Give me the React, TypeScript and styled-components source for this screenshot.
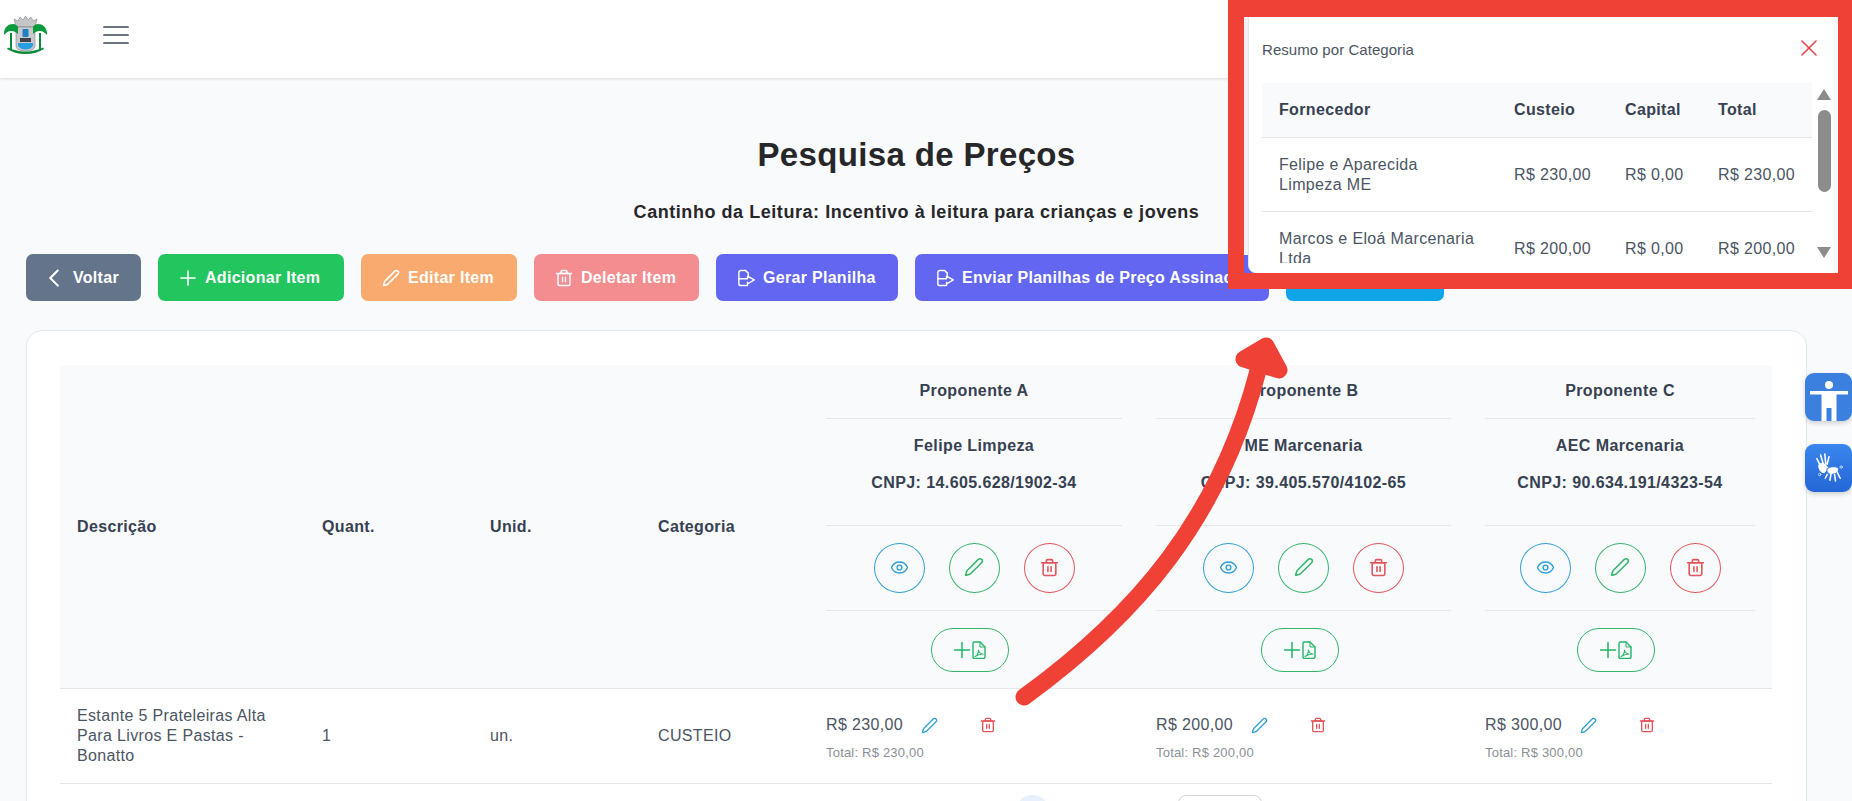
import React from "react";
import styled, { createGlobalStyle } from "styled-components";
import { Eye, Pen, Plus, ChevronLeft, X } from "lucide-react";

const Global = createGlobalStyle`
  html, body { margin: 0; padding: 0; height: 100%; overflow: hidden; }
  body { font-family: "Liberation Sans", Arial, sans-serif; background: #f8fafc; letter-spacing: .35px; }
  * { box-sizing: border-box; }
`;

const Page = styled.div`position: relative; width: 1852px; height: 801px; overflow: hidden; background: #f8fafc;`;
const NavBar = styled.header`
  height: 78px; background: #fff; box-shadow: 0 1px 3px rgba(0,0,0,.12);
  display: flex; align-items: flex-start; padding: 16px 0 0 4px;
`;
const LogoWrap = styled.div`width: 43px; height: 39px;`;
const Burger = styled.button`
  margin: 10px 0 0 56px; width: 26px; padding: 0; border: 0; background: none;
  display: flex; flex-direction: column; gap: 6px;
  span { display: block; height: 2px; background: #6b7280; border-radius: 1px; }
`;
const Main = styled.main`padding: 58px 45px 0 26px;`;
const Title = styled.h1`margin: 0; text-align: center; font-size: 33px; line-height: 38px; font-weight: 700; color: #27272a;`;
const Subtitle = styled.h2`margin: 27px 0 0; text-align: center; font-size: 18px; line-height: 22px; font-weight: 700; letter-spacing: .55px; color: #27272a;`;
const Toolbar = styled.div`display: flex; gap: 17px; margin-top: 31px;`;
const ActionButton = styled.button<{ $bg: string; $w: number }>`
  width: ${(p) => p.$w}px; height: 47px; padding: 0 0 0 21px; display: inline-flex; align-items: center; gap: 8px; flex: none;
  border: 0; border-radius: 7px; background: ${(p) => p.$bg}; color: #fff;
  font: 700 16px "Liberation Sans", Arial, sans-serif; letter-spacing: .3px; white-space: nowrap; overflow: hidden;
`;
const BackIcon = styled(ChevronLeft)`margin: 0 -4px 0 -8px; flex: none;`;
const AddIcon = styled(Plus)`margin: 0 -3px 0 -3px; flex: none;`;
const Card = styled.section`
  margin-top: 29px; height: 520px; background: #fff; border: 1px solid #e2e8f0; border-radius: 16px; padding: 34px 33px;
`;
const DataTable = styled.table`width: 1712px; table-layout: fixed; border-collapse: collapse; color: #4b5563;`;
const Col = styled.col<{ $w: number }>`width: ${(p) => p.$w}px;`;
const HeadRow = styled.tr`background: #f8fafc; border-bottom: 1px solid #e5e7eb;`;
const HeadCell = styled.th`padding: 0 17px; text-align: left; font-size: 16px; line-height: 20px; font-weight: 700; color: #374151; vertical-align: middle;`;
const BodyRow = styled.tr`border-bottom: 1px solid #e5e7eb;`;
const BodyCell = styled.td`padding: 17px; font-size: 16px; line-height: 20px; color: #4b5563; vertical-align: middle;`;
const PropHead = styled.th`padding: 0 17px; font-size: 16px; line-height: 20px; letter-spacing: .4px; color: #374151; text-align: center; font-weight: 700; vertical-align: top;`;
const PropTitle = styled.div`padding: 16px 0 17px; border-bottom: 1px solid #e5e7eb;`;
const PropInfo = styled.div`padding: 17px 0 32px; border-bottom: 1px solid #e5e7eb; display: flex; flex-direction: column; gap: 17px;`;
const PropActions = styled.div`padding: 17px 0 17px; border-bottom: 1px solid #e5e7eb; display: flex; justify-content: center; gap: 24px;`;
const PropAdd = styled.div`padding: 17px 0 16px; display: flex; justify-content: center;`;
const Circle = styled.button<{ $c: string }>`
  width: 51px; height: 50px; border-radius: 50%; background: transparent; border: 1px solid ${(p) => p.$c}; color: ${(p) => p.$c};
  display: flex; align-items: center; justify-content: center; padding: 0 0 2px;
`;
const Pill = styled.button`
  width: 78px; height: 44px; margin-right: 8px; border-radius: 22px; background: transparent; border: 1px solid #35b56a; color: #22b566;
  display: flex; align-items: center; justify-content: center; padding: 0;
`;
const PriceLine = styled.div`display: flex; align-items: center; height: 20px; margin-top: 4px;`;
const Price = styled.span`width: 95px; flex: none;`;
const TextIcon = styled.span<{ $c: string; $w: number }>`display: flex; width: ${(p) => p.$w}px; flex: none; color: ${(p) => p.$c};`;
const PriceTotal = styled.div`margin-top: 10px; font-size: 13px; line-height: 16px; letter-spacing: .2px; color: #8b8f96;`;
const Pager = styled.div`display: flex; gap: 128px; margin: 11px 0 0 955px;`;
const PageDot = styled.div`width: 35px; height: 35px; border-radius: 50%; background: #e8f0fe;`;
const PageBox = styled.div`width: 84px; height: 36px; border-radius: 8px; border: 1px solid #d1d5db; background: #fff;`;

const SideDock = styled.aside`position: absolute; right: 0; top: 373px; display: flex; flex-direction: column; gap: 23px;`;
const DockButton = styled.button<{ $alt?: boolean }>`
  width: 47px; height: 48px; padding: 0; border: 0; border-radius: 9px; display: flex; align-items: center; justify-content: center;
  background: ${(p) => (p.$alt ? "linear-gradient(180deg,#3a86ee,#2466d6)" : "#3b7fdf")};
  box-shadow: 0 2px 5px rgba(0,0,0,.18);
`;
const PersonSvg = styled.svg`margin-top: 7px; flex: none;`;

const Callout = styled.div`
  position: absolute; left: 1228px; top: 0; width: 624px; height: 289px;
  border: solid #f04137; border-width: 17px 14px 16px 16px; background: #f1f3f5; overflow: hidden;
`;
const BehindChip = styled.div`position: absolute; left: 0; bottom: 0; width: 14px; height: 18px; background: #6366f1;`;
const ModalPanel = styled.div`
  position: absolute; left: 4px; right: 0; top: 0; bottom: 0; background: #fff; border-bottom-left-radius: 8px;
  border-left: 1px solid #e5e7eb;
`;
const ModalHead = styled.div`
  height: 66px; padding: 0 15px 2px 13px; display: flex; justify-content: space-between; align-items: center;
  font-size: 15px; letter-spacing: .05px; color: #4b5563;
`;
const CloseIcon = styled(X)`margin-bottom: 2px; color: #e0474c;`;
const ModalBody = styled.div`display: flex; height: 180px; padding-left: 13px;`;
const ModalClip = styled.div`width: 550px; height: 180px; overflow: hidden;`;
const SummaryTable = styled.table`width: 550px; table-layout: fixed; border-collapse: collapse;`;
const SumHeadRow = styled.tr`background: #f8fafc; border-bottom: 1px solid #e5e7eb;`;
const SumHead = styled.th`padding: 17px; text-align: left; font-size: 16px; line-height: 20px; font-weight: 700; color: #374151; height: 54px;`;
const SumRow = styled.tr`border-bottom: 1px solid #e5e7eb;`;
const SumCell = styled.td`padding: 17px 17px 16px; font-size: 16px; line-height: 20px; color: #4b5563; white-space: normal;`;
const SumValue = styled(SumCell)`white-space: nowrap; overflow: visible; padding-right: 0;`;
const FakeScroll = styled.div`
  width: 14px; margin-left: 5px; position: relative; height: 180px; flex: none;
  display: flex; flex-direction: column; align-items: center;
`;
const ScrollThumb = styled.div`width: 13px; height: 82px; margin-top: 10px; border-radius: 7px; background: #8c8c8c;`;
const ScrollUp = styled.div`margin-top: 6px; width: 0; height: 0; border: 7px solid transparent; border-top: 0; border-bottom: 11px solid #8c8c8c;`;
const ScrollDown = styled.div`margin-top: 55px; width: 0; height: 0; border: 7px solid transparent; border-bottom: 0; border-top: 11px solid #8c8c8c;`;
const ArrowLayer = styled.svg`position: absolute; left: 0; top: 0; width: 1852px; height: 801px; pointer-events: none;`;

const Logo = () => (
  <svg width="43" height="39" viewBox="0 0 43 39">
    <path d="M7 17v17M36 17v17" stroke="#0b8a3a" strokeWidth="2" />
    <path d="M12 11 10 3l4 2 2-4 3 3 2.500-4L24 4l3-3 2 4 4-2-2 8z" fill="#c4c6c8" stroke="#85888c" strokeWidth=".6" />
    <path d="M12 11h19v19c0 3-4 5-9.500 5S12 33 12 30z" fill="#c8cbcd" stroke="#7a7d81" strokeWidth=".6" />
    <path d="M0 19C-.5 12 4 8 9 8c2 0 4 1 5 3v7c-2-2-4-3-7-3-3 0-5 2-7 4z" fill="#0b9a3e" />
    <path d="M43 19c.5-7-4-11-9-11-2 0-4 1-5 3v7c2-2 4-3 7-3 3 0 5 2 7 4z" fill="#0b9a3e" />
    <rect x="18.500" y="13" width="6" height="8" rx="1" fill="#1f7fc4" />
    <rect x="16" y="22" width="11" height="4" fill="#3f4347" />
    <path d="M14 27h15v3c-2 2.500-4 3.500-7.500 3.500S16 32.500 14 30z" fill="#2a9de0" />
    <path d="M3 33c5 3 11 5 18.500 5S35 36 40 33l-1-1.500c-4 2-11 4-17.500 4S8 33.500 4 31.500z" fill="#0b8a3a" />
  </svg>
);

const FileOut = ({ size = 18 }: { size?: number }) => (
  <svg width={size} height={size} viewBox="0 0 24 24" fill="none" stroke="currentColor" strokeWidth="1.900" strokeLinecap="round" strokeLinejoin="round">
    <path d="M2.500 13V4.500A2.500 2.500 0 0 1 5 2h6.500L15 5.500V9" />
    <path d="M2.500 13h11.500V9.500L23 14.500 14 20v-2.500" />
    <path d="M2.500 13v6.500A2.500 2.500 0 0 0 5 22h9V20" />
  </svg>
);
const Bin = ({ size = 18 }: { size?: number }) => (
  <svg width={size} height={size} viewBox="0 0 24 24" fill="none" stroke="currentColor" strokeWidth="2" strokeLinecap="round" strokeLinejoin="round">
    <path d="M2 6h20M8 6V3.500A1.500 1.500 0 0 1 9.500 2h5A1.500 1.500 0 0 1 16 3.500V6" />
    <rect x="4" y="6" width="16" height="16" rx="2" />
    <path d="M10 11v6M14 11v6" />
  </svg>
);
const PdfAdd = () => (
  <svg width="32" height="18" viewBox="0 0 32 18" fill="none" stroke="currentColor" strokeLinecap="round" strokeLinejoin="round">
    <path d="M0.500 9h15M8 1.500v15" strokeWidth="1.500" />
    <path d="M19 16V2.500a1.500 1.500 0 0 1 1.500-1.500H26l5 5v10a1.500 1.500 0 0 1-1.500 1.500h-9A1.500 1.500 0 0 1 19 16z" strokeWidth="1.400" />
    <path d="M26 1v5h5" strokeWidth="1" />
    <path d="M21 15.500c2.500-1 3.500-4 3.500-6.500.7 3 2.500 4 4.500 4-2.500 0-5.500 1-8 2.500z" strokeWidth="1.100" />
  </svg>
);
const PersonIcon = () => (
  <PersonSvg width="38" height="40" viewBox="0 0 38 40" fill="#fff">
    <circle cx="19" cy="4" r="4" />
    <path d="M0 10h38v3.500H26.500V40H21.500V27h-5V40H11.500V13.500H0z" />
  </PersonSvg>
);
const HandsIcon = () => (
  <svg width="28" height="30" viewBox="0 0 30 32" fill="none" stroke="#fff" strokeLinecap="round">
    <path d="M2 6l4 8M6 2l3 10M10.500 1l1 10M15 4l-2 8" strokeWidth="1.700" />
    <path d="M4 13c0 5 2 8 6 8l4-5-3-4-4-1z" fill="#fff" strokeWidth="1" />
    <path d="M13 17c3-3 9-3 12-1 1 3-1 5-3 6l-5 1c-3-1-5-3-4-6z" fill="#fff" stroke="#2f78e4" strokeWidth="1" />
    <path d="M13 23l-2 4M17 23l-1 6M21 23l1 7M24 21l3 6" strokeWidth="1.700" />
    <circle cx="5" cy="23" r="1.300" strokeWidth=".7" />
    <circle cx="28" cy="15" r="1.300" strokeWidth=".7" />
  </svg>
);

const vendors = [
  { p: "Proponente A", n: "Felipe Limpeza", c: "CNPJ: 14.605.628/1902-34", v: "R$ 230,00" },
  { p: "Proponente B", n: "ME Marcenaria", c: "CNPJ: 39.405.570/4102-65", v: "R$ 200,00" },
  { p: "Proponente C", n: "AEC Marcenaria", c: "CNPJ: 90.634.191/4323-54", v: "R$ 300,00" },
];
const summary = [
  { f: "Felipe e Aparecida Limpeza ME", cu: "R$ 230,00", t: "R$ 230,00" },
  { f: "Marcos e Eloá Marcenaria Ltda", cu: "R$ 200,00", t: "R$ 200,00" },
];

export default function App() {
  return (
    <Page>
      <Global />
      <NavBar>
        <LogoWrap><Logo /></LogoWrap>
        <Burger aria-label="menu"><span /><span /><span /></Burger>
      </NavBar>
      <Main>
        <Title>Pesquisa de Preços</Title>
        <Subtitle>Cantinho da Leitura: Incentivo à leitura para crianças e jovens</Subtitle>
        <Toolbar>
          <ActionButton $bg="#64748b" $w={115}><BackIcon size={30} strokeWidth={1.700} />Voltar</ActionButton>
          <ActionButton $bg="#22c55e" $w={186}><AddIcon size={24} strokeWidth={1.700} />Adicionar Item</ActionButton>
          <ActionButton $bg="#f8aa6f" $w={156}><Pen size={18} />Editar Item</ActionButton>
          <ActionButton $bg="#f38d8f" $w={165}><Bin />Deletar Item</ActionButton>
          <ActionButton $bg="#6366f1" $w={182}><FileOut />Gerar Planilha</ActionButton>
          <ActionButton $bg="#6366f1" $w={354}><FileOut />Enviar Planilhas de Preço Assinadas</ActionButton>
          <ActionButton $bg="#0ea5e9" $w={158}>Ver Resumo</ActionButton>
        </Toolbar>
        <Card>
          <DataTable>
            <colgroup>
              <Col $w={245} /><Col $w={168} /><Col $w={168} /><Col $w={168} /><Col $w={330} /><Col $w={329} /><Col $w={304} />
            </colgroup>
            <thead>
              <HeadRow>
                <HeadCell>Descrição</HeadCell>
                <HeadCell>Quant.</HeadCell>
                <HeadCell>Unid.</HeadCell>
                <HeadCell>Categoria</HeadCell>
                {vendors.map((v) => (
                  <PropHead key={v.p}>
                    <PropTitle>{v.p}</PropTitle>
                    <PropInfo><span>{v.n}</span><span>{v.c}</span></PropInfo>
                    <PropActions>
                      <Circle $c="#2f9fd8"><Eye size={19} strokeWidth={1.800} /></Circle>
                      <Circle $c="#35b56a"><Pen size={20} strokeWidth={1.800} /></Circle>
                      <Circle $c="#e2555a"><Bin size={19} /></Circle>
                    </PropActions>
                    <PropAdd><Pill><PdfAdd /></Pill></PropAdd>
                  </PropHead>
                ))}
              </HeadRow>
            </thead>
            <tbody>
              <BodyRow>
                <BodyCell>Estante 5 Prateleiras Alta Para Livros E Pastas - Bonatto</BodyCell>
                <BodyCell>1</BodyCell>
                <BodyCell>un.</BodyCell>
                <BodyCell>CUSTEIO</BodyCell>
                {vendors.map((v) => (
                  <BodyCell key={v.p}>
                    <PriceLine>
                      <Price>{v.v}</Price>
                      <TextIcon $c="#2f9fd8" $w={59}><Pen size={17} strokeWidth={1.800} /></TextIcon>
                      <TextIcon $c="#e2555a" $w={16}><Bin size={16} /></TextIcon>
                    </PriceLine>
                    <PriceTotal>Total: {v.v}</PriceTotal>
                  </BodyCell>
                ))}
              </BodyRow>
            </tbody>
          </DataTable>
          <Pager><PageDot /><PageBox /></Pager>
        </Card>
      </Main>
      <SideDock>
        <DockButton aria-label="acessibilidade"><PersonIcon /></DockButton>
        <DockButton $alt aria-label="libras"><HandsIcon /></DockButton>
      </SideDock>
      <Callout>
        <BehindChip />
        <ModalPanel>
          <ModalHead>
            <span>Resumo por Categoria</span>
            <CloseIcon size={28} strokeWidth={1.400} />
          </ModalHead>
          <ModalBody>
            <ModalClip>
              <SummaryTable>
                <colgroup><Col $w={235} /><Col $w={111} /><Col $w={93} /><Col $w={111} /></colgroup>
                <thead>
                  <SumHeadRow>
                    <SumHead>Fornecedor</SumHead>
                    <SumHead>Custeio</SumHead>
                    <SumHead>Capital</SumHead>
                    <SumHead>Total</SumHead>
                  </SumHeadRow>
                </thead>
                <tbody>
                  {summary.map((s) => (
                    <SumRow key={s.f}>
                      <SumCell>{s.f}</SumCell>
                      <SumValue>{s.cu}</SumValue>
                      <SumValue>R$ 0,00</SumValue>
                      <SumValue>{s.t}</SumValue>
                    </SumRow>
                  ))}
                </tbody>
              </SummaryTable>
            </ModalClip>
            <FakeScroll><ScrollUp /><ScrollThumb /><ScrollDown /></FakeScroll>
          </ModalBody>
        </ModalPanel>
      </Callout>
      <ArrowLayer viewBox="0 0 1852 801">
        <path d="M1024 697C1130 620 1225 520 1263 350" fill="none" stroke="#f04137" strokeWidth="17" strokeLinecap="round" />
        <path d="M1244 359L1266 346L1279 370Z" fill="#f04137" stroke="#f04137" strokeWidth="17" strokeLinecap="round" strokeLinejoin="round" />
      </ArrowLayer>
    </Page>
  );
}
